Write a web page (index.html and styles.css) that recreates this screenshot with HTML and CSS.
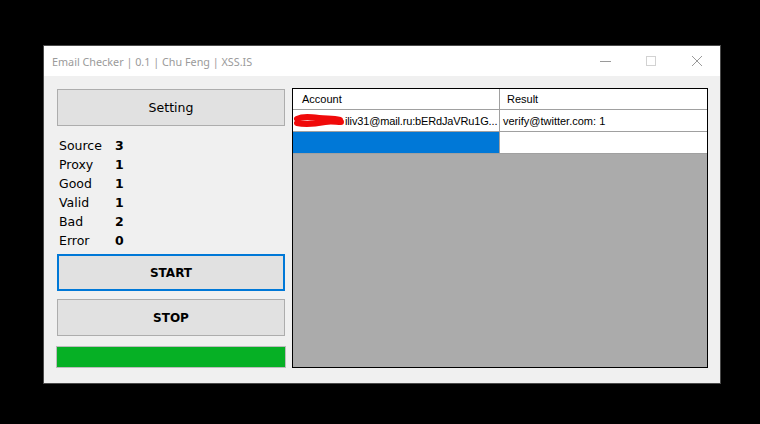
FILE: index.html
```html
<!DOCTYPE html>
<html lang="en">
<head>
    <meta charset="UTF-8">
    <title>Email Checker</title>
    <link rel="stylesheet" href="styles.css">
</head>
<body>
    <div class="window">
        <!-- Title bar -->
        <div class="titlebar">
            <span class="title">Email Checker | 0.1 | Chu Feng | XSS.IS</span>
            <div class="caption-buttons">
                <div class="cap">
                    <svg width="12" height="12" viewBox="0 0 12 12"><line x1="1" y1="6.5" x2="12" y2="6.5" stroke="#9a9a9a" stroke-width="1"/></svg>
                </div>
                <div class="cap">
                    <svg width="12" height="12" viewBox="0 0 12 12"><rect x="1.5" y="1.5" width="9" height="9" fill="none" stroke="#d2d2d2" stroke-width="1"/></svg>
                </div>
                <div class="cap">
                    <svg width="12" height="12" viewBox="0 0 12 12"><path d="M1 1 L11 11 M11 1 L1 11" stroke="#9a9a9a" stroke-width="1"/></svg>
                </div>
            </div>
        </div>

        <div class="client">
            <!-- Left panel -->
            <div class="panel">
                <button class="btn btn-setting">Setting</button>
                <div class="stats">
                    <div class="stat"><span class="label">Source</span><span class="value">3</span></div>
                    <div class="stat"><span class="label">Proxy</span><span class="value">1</span></div>
                    <div class="stat"><span class="label">Good</span><span class="value">1</span></div>
                    <div class="stat"><span class="label">Valid</span><span class="value">1</span></div>
                    <div class="stat"><span class="label">Bad</span><span class="value">2</span></div>
                    <div class="stat"><span class="label">Error</span><span class="value">0</span></div>
                </div>
                <button class="btn btn-bold btn-focus">START</button>
                <button class="btn btn-bold btn-stop">STOP</button>
                <div class="progress"><div class="progress-fill" style="width: 100%;"></div></div>
            </div>

            <!-- Results grid -->
            <div class="grid">
                <div class="row header">
                    <div class="cell head-account">Account</div>
                    <div class="cell head-result">Result</div>
                </div>
                <div class="row">
                    <div class="cell account">
                        <svg class="scribble" width="52" height="16" viewBox="0 0 52 16">
                            <path d="M4 6 C10 3 18 4 26 5 C34 6 40 5 47 7 M4 10 C12 12 22 11 32 9 C38 8 43 9 48 9" stroke="#f00a0a" stroke-width="6" stroke-linecap="round" fill="none"/>
                        </svg>
                        <span class="account-text">iliv31@mail.ru:bERdJaVRu1G...</span>
                    </div>
                    <div class="cell result">verify@twitter.com: 1</div>
                </div>
                <div class="row">
                    <div class="cell selected"></div>
                    <div class="cell result"></div>
                </div>
            </div>
        </div>
    </div>
</body>
</html>
```

FILE: styles.css
```css
body {
    margin: 0;
    background-color: #000;
    width: 760px;
    height: 424px;
    overflow: hidden;
}
.window {
    margin: 45px 0 0 43px;
    width: 676px;
    border: 1px solid #4a4a4a;
    background-color: #f0f0f0;
}
.titlebar {
    height: 30px;
    background-color: #fff;
    display: flex;
    align-items: center;
    justify-content: space-between;
}
.title {
    padding-left: 8px;
    font-family: "Noto Sans", sans-serif;
    font-size: 10.8px;
    color: #9a9a9a;
}
.caption-buttons {
    display: flex;
    height: 30px;
}
.cap {
    width: 46px;
    display: flex;
    justify-content: center;
    align-items: center;
}
.client {
    display: flex;
    gap: 6px;
    padding: 12px 12px 15px 12px;
}
.panel {
    width: 230px;
    display: flex;
    flex-direction: column;
}
.btn {
    box-sizing: border-box;
    height: 37px;
    margin: 0 1px;
    background-color: #e1e1e1;
    border: 1px solid #adadad;
    font-family: "DejaVu Sans", sans-serif;
    font-size: 12.5px;
    color: #000;
    padding: 0;
}
.btn-setting {
    margin-top: 1px;
}
.btn-bold {
    font-weight: bold;
    font-size: 12px;
}
.btn-focus {
    margin-top: 4px;
    border: 2px solid #0078d7;
}
.btn-stop {
    margin-top: 8px;
}
.stats {
    margin-top: 10px;
    padding-left: 3px;
    font-family: "DejaVu Sans", sans-serif;
    font-size: 12.5px;
    color: #000;
}
.stat {
    display: flex;
    height: 19px;
    line-height: 19px;
}
.label {
    width: 56px;
}
.value {
    font-weight: bold;
}
.progress {
    box-sizing: border-box;
    margin-top: 10px;
    height: 22px;
    border: 1px solid #bcbcbc;
    background-color: #e6e6e6;
}
.progress-fill {
    height: 100%;
    background-color: #06b025;
}
.grid {
    box-sizing: border-box;
    width: 416px;
    height: 280px;
    border: 1px solid #000;
    background-color: #ababab;
    font-family: "Liberation Sans", Arial, sans-serif;
    font-size: 11px;
    color: #000;
}
.row {
    display: grid;
    grid-template-columns: 207px 1fr;
    height: 22px;
}
.row.header {
    height: 21px;
}
.cell {
    background-color: #fff;
    border-bottom: 1px solid #a0a0a0;
    display: flex;
    align-items: center;
    white-space: nowrap;
    overflow: hidden;
}
.cell:first-child {
    border-right: 1px solid #a0a0a0;
}
.head-account {
    padding-left: 9px;
}
.head-result {
    padding-left: 7px;
}
.account {
    position: relative;
    padding-left: 52px;
}
.account-text {
    letter-spacing: -0.15px;
}
.scribble {
    position: absolute;
    left: 0;
    top: 3px;
}
.result {
    padding-left: 3px;
}
.selected {
    background-color: #0078d7;
}
```
